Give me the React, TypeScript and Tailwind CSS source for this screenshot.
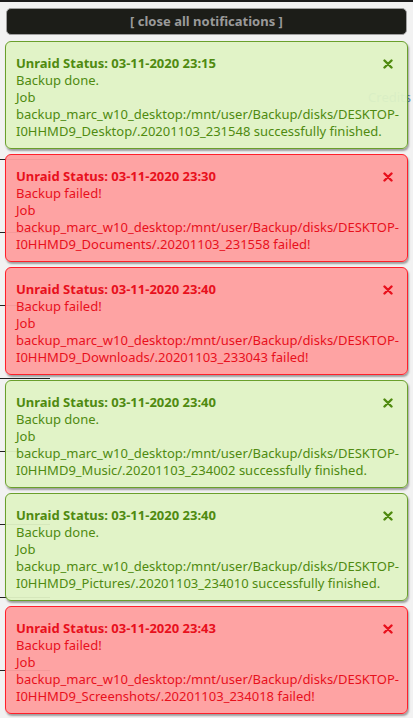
import React from "react";

type Note = {
  ok: boolean;
  time: string;
  folder: string;
  stamp: string;
};

const notes: Note[] = [
  { ok: true, time: "23:15", folder: "Desktop", stamp: "20201103_231548" },
  { ok: false, time: "23:30", folder: "Documents", stamp: "20201103_231558" },
  { ok: false, time: "23:40", folder: "Downloads", stamp: "20201103_233043" },
  { ok: true, time: "23:40", folder: "Music", stamp: "20201103_234002" },
  { ok: true, time: "23:40", folder: "Pictures", stamp: "20201103_234010" },
  { ok: false, time: "23:43", folder: "Screenshots", stamp: "20201103_234018" },
];

function CloseMark({ color }: { color: string }) {
  return (
    <svg width="10" height="10" viewBox="0 0 10 10" className="shrink-0">
      <path d="M1.5 1.5 L8.5 8.5 M8.5 1.5 L1.5 8.5" stroke={color} strokeWidth="2.4" strokeLinecap="round" />
    </svg>
  );
}

function Notification({ n }: { n: Note }) {
  const box = n.ok
    ? "bg-[#dff2c4]/95 border-[#6a9f2c] text-[#4f8a10]"
    : "bg-[#ff9f9f]/95 border-[#ff1f2a] text-[#e8101c]";
  return (
    <div
      className={`relative h-[108px] rounded-[6px] border-[1.5px] ${box} pl-[10px] pr-[14px] pt-[13px] shadow-[1px_2px_2px_rgba(0,0,0,0.35)]`}
    >
      <div className="flex items-center justify-between leading-[17px]">
        <span className="font-bold">Unraid Status: 03-11-2020 {n.time}</span>
        <CloseMark color={n.ok ? "#4f8a10" : "#e8101c"} />
      </div>
      <div className="leading-[17px]">{n.ok ? "Backup done." : "Backup failed!"}</div>
      <div className="leading-[17px]">Job</div>
      <div className="leading-[17px]">backup_marc_w10_desktop:/mnt/user/Backup/disks/DESKTOP-</div>
      <div className="leading-[17px] whitespace-nowrap">
        I0HHMD9_{n.folder}/.{n.stamp} {n.ok ? "successfully finished." : "failed!"}
      </div>
    </div>
  );
}

export default function App() {
  return (
    <div
      className="relative h-[718px] w-[413px] overflow-hidden bg-[#f2f2f2] text-[13px]"
      style={{ fontFamily: '"Noto Sans", "Open Sans", sans-serif' }}
    >
      {/* page content underneath the notification stack */}
      <div className="h-[2px] bg-[#1c1c1c]" />
      <div className="flex justify-end pr-[2px] pt-[86px] text-[13px] text-[#2a6db3]">
        <span className="opacity-70">Credits</span>
      </div>
      <div className="flex flex-col pt-[51px]">
        {Array.from({ length: 8 }).map((_, i) => (
          <div key={i} className="h-[73px] border-t border-[#222] w-[50px]" />
        ))}
      </div>

      {/* notification stack */}
      <div className="absolute inset-0 flex flex-col gap-[5px] px-[5px] pt-[8px]">
        <button className="mx-[1px] mb-[1px] h-[27px] rounded-[5px] border border-[#a0a0a0] bg-[#1c1d18] text-[13px] font-bold text-[#9a9a9a]">
          [ close all notifications ]
        </button>
        {notes.map((n, i) => (
          <Notification key={i} n={n} />
        ))}
      </div>
    </div>
  );
}
